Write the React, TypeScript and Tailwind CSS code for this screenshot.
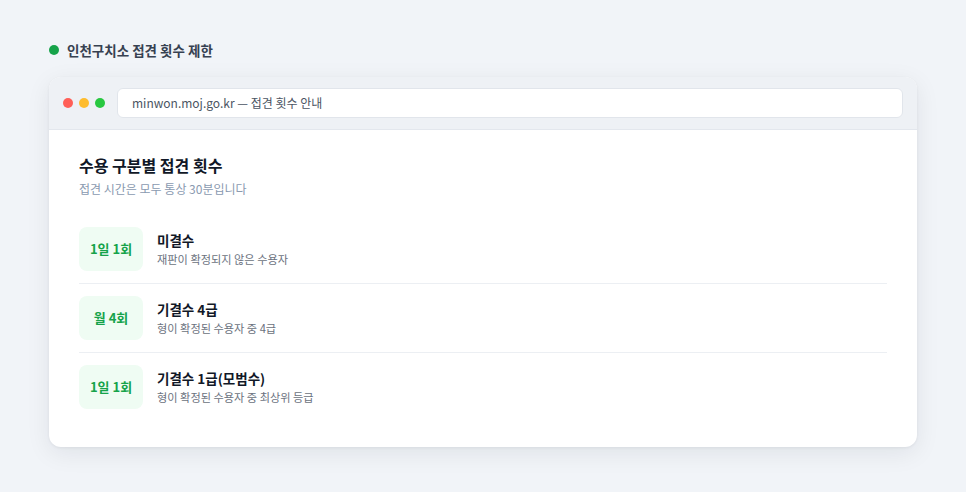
const rows = [
  { badge: "1일 1회", title: "미결수", desc: "재판이 확정되지 않은 수용자" },
  { badge: "월 4회", title: "기결수 4급", desc: "형이 확정된 수용자 중 4급" },
  { badge: "1일 1회", title: "기결수 1급(모범수)", desc: "형이 확정된 수용자 중 최상위 등급" },
];

export default function App() {
  return (
    <div
      className="min-h-[492px] w-full bg-[#f1f4f8] px-[49px] pt-[40px]"
      style={{ fontFamily: '"Noto Sans CJK KR", "Noto Sans", sans-serif' }}
    >
      <div className="flex items-center gap-[8px]">
        <span className="h-[10px] w-[10px] rounded-full bg-[#16a34a]" />
        <span className="text-[13.5px] font-bold leading-[20px] text-[#374151]">인천구치소 접견 횟수 제한</span>
      </div>

      <div className="mt-[17px] w-[868px] overflow-hidden rounded-[12px] bg-white shadow-[0_6px_24px_rgba(15,23,42,0.08),0_1px_3px_rgba(15,23,42,0.06)]">
        <div className="flex h-[53px] items-center gap-[12px] border-b border-[#e3e7ed] bg-[#eef1f5] pl-[14px] pr-[14px]">
          <div className="flex gap-[6px]">
            <span className="h-[10px] w-[10px] rounded-full bg-[#ff5f57]" />
            <span className="h-[10px] w-[10px] rounded-full bg-[#febc2e]" />
            <span className="h-[10px] w-[10px] rounded-full bg-[#28c840]" />
          </div>
          <div className="flex h-[30px] flex-1 items-center rounded-[6px] border border-[#e1e5eb] bg-white px-[14px] text-[12px] text-[#4b5563]">
            minwon.moj.go.kr — 접견 횟수 안내
          </div>
        </div>

        <div className="px-[30px] pb-[26px] pt-[23px]">
          <h1 className="text-[16px] font-bold leading-[24px] text-[#111827]">수용 구분별 접견 횟수</h1>
          <p className="mt-[3px] text-[12px] leading-[18px] text-[#8a9ab0]">접견 시간은 모두 통상 30분입니다</p>

          <div className="mt-[17px]">
            {rows.map((r, i) => (
              <div
                key={i}
                className={`flex items-center gap-[14px] py-[12px] ${i < rows.length - 1 ? "border-b border-[#eceff3]" : ""}`}
              >
                <div className="flex h-[44px] w-[64px] items-center justify-center rounded-[8px] bg-[#effcf3] text-[13px] font-bold text-[#16a34a]">
                  {r.badge}
                </div>
                <div className="flex flex-col">
                  <span className="text-[13.5px] font-bold leading-[19px] text-[#111827]">{r.title}</span>
                  <span className="mt-[1px] text-[11.2px] leading-[16px] text-[#6b7280]">{r.desc}</span>
                </div>
              </div>
            ))}
          </div>
        </div>
      </div>
    </div>
  );
}
